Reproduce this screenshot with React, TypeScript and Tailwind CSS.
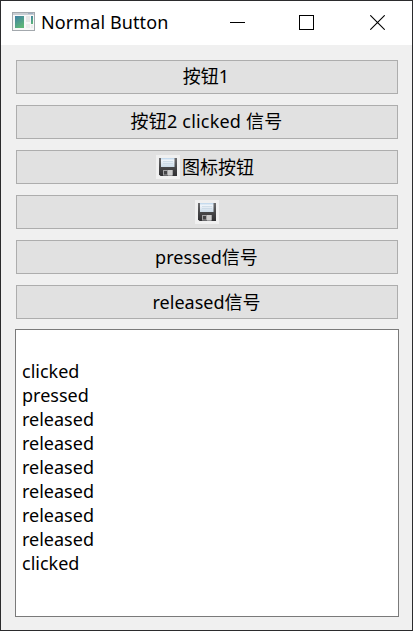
import type { ReactNode } from "react";

function WindowIcon() {
  return (
    <svg width="24" height="20" viewBox="0 0 24 20" className="-mt-px" shapeRendering="crispEdges">
      <defs>
        <linearGradient id="pane" x1="0" y1="0" x2="0.5" y2="1">
          <stop offset="0" stopColor="#3f7fa5" />
          <stop offset="1" stopColor="#5db578" />
        </linearGradient>
      </defs>
      <rect x="0.5" y="0.5" width="22" height="18" rx="1" fill="#f8f8f8" stroke="#a3a8ad" />
      <rect x="1" y="1" width="21" height="2" fill="#c9cdd2" />
      <rect x="16" y="1" width="5" height="1" fill="#9fb0c4" />
      <rect x="3" y="4" width="9" height="12" fill="url(#pane)" />
      <rect x="14" y="4" width="4" height="6" fill="#e6e6e6" />
      <rect x="14" y="12" width="4" height="4" fill="#ececec" />
      <rect x="19" y="4" width="2" height="8" fill="url(#pane)" />
      <rect x="19" y="13" width="2" height="3" fill="#ececec" />
    </svg>
  );
}

function SaveIcon() {
  return (
    <svg width="24" height="24" viewBox="0 0 24 24" className="shrink-0">
      <defs>
        <linearGradient id="disk" x1="0" y1="0" x2="0" y2="1">
          <stop offset="0" stopColor="#6c6c6e" />
          <stop offset="0.5" stopColor="#48484a" />
          <stop offset="1" stopColor="#2f2f32" />
        </linearGradient>
        <linearGradient id="label" x1="0" y1="0" x2="0" y2="1">
          <stop offset="0" stopColor="#b9d3ea" />
          <stop offset="0.25" stopColor="#f0f5fa" />
          <stop offset="1" stopColor="#cbdbe8" />
        </linearGradient>
      </defs>
      <rect width="24" height="24" fill="#f0f0f0" />
      <path d="M3 3H21V21H4.5L3 19.5Z" fill="url(#disk)" />
      <rect x="5" y="3" width="13.5" height="9" fill="url(#label)" />
      <path d="M7 6.5H17M7 8.5H17" stroke="#c5d5e3" strokeWidth="0.7" />
      <rect x="7" y="15" width="10" height="5.5" fill="#a2a2a4" />
      <rect x="12" y="15" width="4" height="5.5" fill="#cccccc" />
      <rect x="8" y="16" width="3" height="3.5" fill="#454547" />
    </svg>
  );
}

function PushButton({ children }: { children: ReactNode }) {
  return (
    <button className="flex h-[34px] w-full items-center justify-center border border-[#adadad] bg-[#e1e1e1] leading-none whitespace-pre">
      {children}
    </button>
  );
}

const log = ["", "clicked", "pressed", "released", "released", "released", "released", "released", "released", "clicked"];

export default function App() {
  return (
    <div className="flex h-[631px] w-[413px] flex-col border border-[#2b2b2d] bg-[#f0f0f0] font-['Noto_Sans','Noto_Sans_CJK_SC',sans-serif] text-[18px] text-black">
      <header className="flex h-11 shrink-0 items-center bg-white pb-px pl-[11px]">
        <WindowIcon />
        <h1 className="ml-[5px] pb-px leading-none tracking-[0.1px]">Normal Button</h1>
        <div className="mr-[27px] ml-auto flex items-center gap-[54px]">
          <svg width="15" height="15" shapeRendering="crispEdges">
            <path d="M0 7.5H15" stroke="black" />
          </svg>
          <svg width="15" height="15" shapeRendering="crispEdges">
            <rect x="0.5" y="0.5" width="14" height="14" fill="none" stroke="black" />
          </svg>
          <svg width="15" height="15" className="ml-[2px]">
            <path d="M0.3 0.3L14.7 14.7M14.7 0.3L0.3 14.7" stroke="black" strokeWidth="1.1" />
          </svg>
        </div>
      </header>
      <main className="flex flex-col pt-[15px] pr-[13px] pl-[14px]">
        <div className="flex flex-col gap-[11px] pr-px pl-px">
          <PushButton>
            <span className="pr-[2px] pb-[2px]">按钮1</span>
          </PushButton>
          <PushButton>
            <span className="pr-px pb-[2px] tracking-[0.2px]">按钮2 clicked 信号</span>
          </PushButton>
          <PushButton>
            <SaveIcon />
            <span className="mr-[4px] ml-[2px]">图标按钮</span>
          </PushButton>
          <PushButton>
            <SaveIcon />
          </PushButton>
          <PushButton>
            <span className="pr-px">pressed信号</span>
          </PushButton>
          <PushButton>
            <span className="pr-px">released信号</span>
          </PushButton>
        </div>
        <div className="mt-[10px] h-[288px] border border-[#7a7a7a] bg-white pt-[5px] pl-[6px]">
          {log.map((line, i) => (
            <p key={i} className="h-6 leading-6">
              {line}
            </p>
          ))}
        </div>
      </main>
    </div>
  );
}
